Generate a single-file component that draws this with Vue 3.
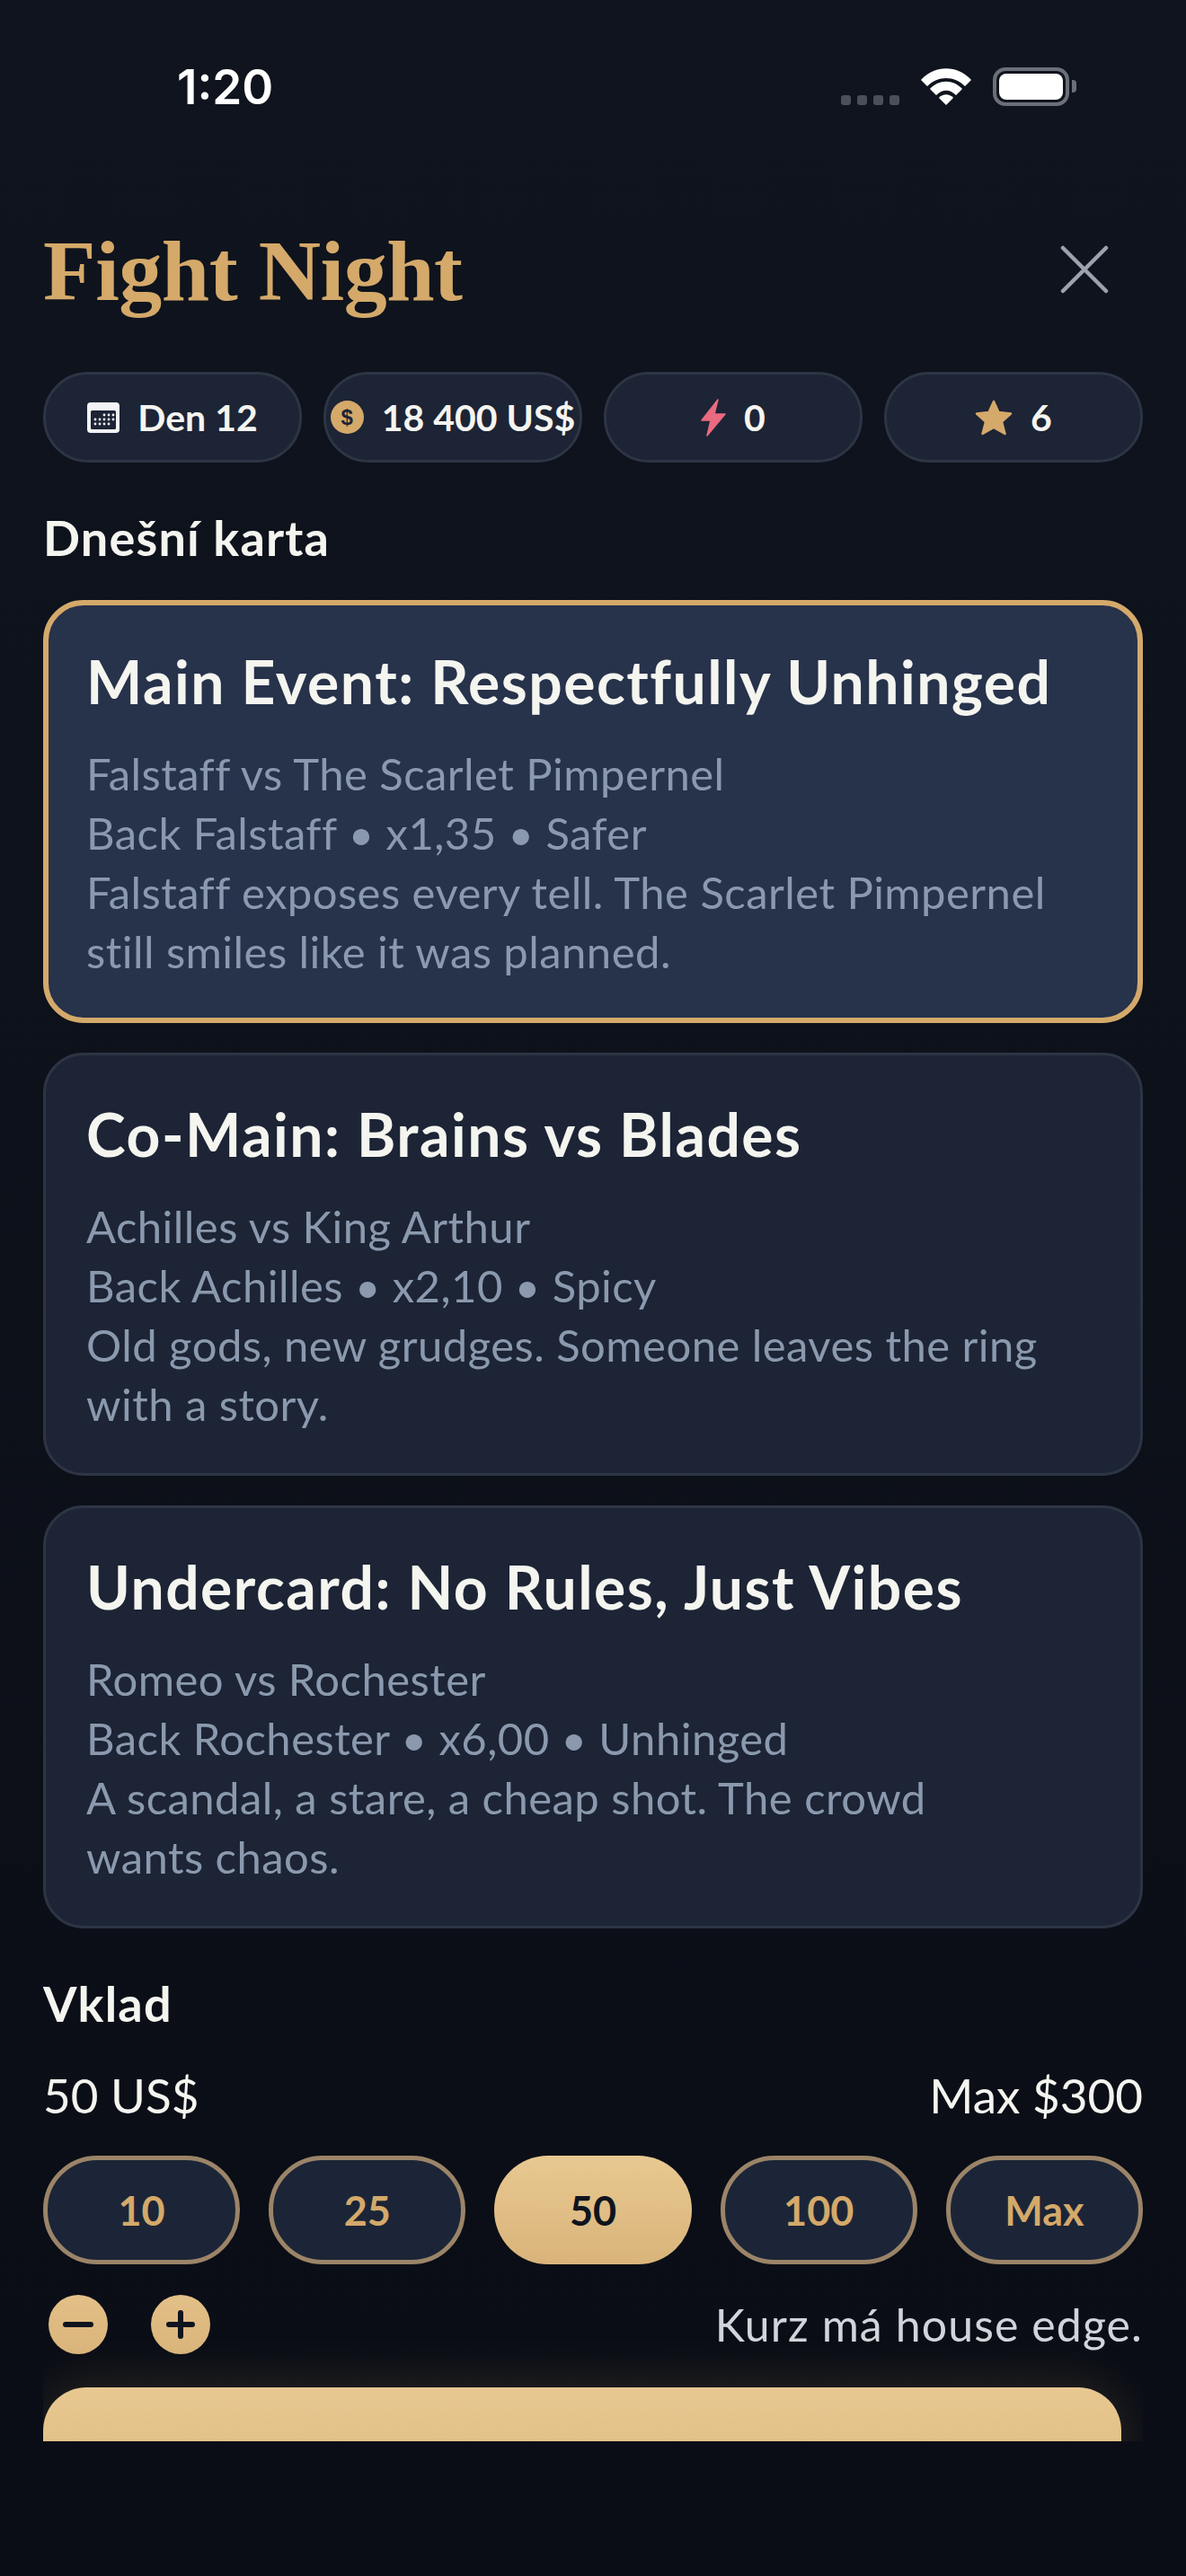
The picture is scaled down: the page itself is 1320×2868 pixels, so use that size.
<template>
  <div class="screen">
    <div class="status">
      <span class="time">1:20</span>
      <div class="status-icons">
        <div class="signal"><i></i><i></i><i></i><i></i></div>
        <svg class="wifi" width="58" height="42" viewBox="0 0 58 42">
          <path d="M1 14 C16 -3 42 -3 57 14 L50 21 C38 9 20 9 8 21 Z" fill="#fff" />
          <path d="M11 24 C21 13 37 13 47 24 L40 31 C33 24 25 24 18 31 Z" fill="#fff" />
          <path d="M21 34 C25 29 33 29 37 34 L29 42 Z" fill="#fff" />
        </svg>
        <div class="battery"><div class="battery-fill"></div></div>
        <div class="battery-cap"></div>
      </div>
    </div>

    <div class="sheet">
      <div class="header">
        <h1>Fight Night</h1>
        <svg class="close" width="54" height="54" viewBox="0 0 54 54">
          <path d="M3 3 L51 51 M51 3 L3 51" stroke="#9ca3af" stroke-width="4.5" stroke-linecap="round" />
        </svg>
      </div>

      <div class="pills">
        <div class="pill">
          <svg width="36" height="34" viewBox="0 0 36 34">
            <rect width="36" height="34" rx="4" fill="#f3f4f6" />
            <rect x="4" y="9" width="28" height="21" rx="1.5" fill="#1c2435" />
            <g fill="#f3f4f6">
              <circle v-for="d in calendarDots" :key="d.x + '-' + d.y" :cx="d.x" :cy="d.y" r="1.4" />
            </g>
          </svg>
          <span>Den 12</span>
        </div>
        <div class="pill">
          <div class="coin">$</div>
          <span>18 400 US$</span>
        </div>
        <div class="pill">
          <svg width="28" height="42" viewBox="0 0 28 42">
            <path d="M19 1 L1 24 L11 24 L7 41 L27 17 L15 17 Z" fill="#ea6a80" stroke="#ea6a80" stroke-width="1.5" stroke-linejoin="round" />
          </svg>
          <span>0</span>
        </div>
        <div class="pill">
          <svg width="42" height="40" viewBox="0 0 42 40">
            <path d="M21 2 L26.5 14 L40 15.5 L30 24.5 L33.5 38 L21 31 L8.5 38 L12 24.5 L2 15.5 L15.5 14 Z" fill="#d4a96a" stroke="#d4a96a" stroke-width="2.5" stroke-linejoin="round" />
          </svg>
          <span>6</span>
        </div>
      </div>

      <h2 class="section">Dnešní karta</h2>

      <div class="cards">
        <div v-for="(c, i) in cards" :key="c.title" class="card" :class="{ selected: i === 0 }">
          <h3>{{ c.title }}</h3>
          <p>{{ c.match }}</p>
          <p>{{ c.back }}</p>
          <p>{{ c.text }}</p>
        </div>
      </div>

      <h2 class="section stake">Vklad</h2>
      <div class="stake-row">
        <span>50 US$</span>
        <span>Max $300</span>
      </div>

      <div class="chips">
        <button v-for="a in amounts" :key="a" class="chip" :class="{ active: a === '50' }">{{ a }}</button>
      </div>

      <div class="adjust">
        <div class="steppers">
          <div class="step">
            <svg width="34" height="8" viewBox="0 0 34 8"><path d="M3 4 H31" stroke="#0f141e" stroke-width="6" stroke-linecap="round" /></svg>
          </div>
          <div class="step">
            <svg width="32" height="32" viewBox="0 0 32 32"><path d="M3 16 H29 M16 3 V29" stroke="#0f141e" stroke-width="6" stroke-linecap="round" /></svg>
          </div>
        </div>
        <span class="edge">Kurz má house edge.</span>
      </div>

      <button class="cta">Vsadit a spustit další kolo</button>
    </div>
  </div>
</template>

<script setup>
const cards = [
  {
    title: 'Main Event: Respectfully Unhinged',
    match: 'Falstaff vs The Scarlet Pimpernel',
    back: 'Back Falstaff • x1,35 • Safer',
    text: 'Falstaff exposes every tell. The Scarlet Pimpernel still smiles like it was planned.'
  },
  {
    title: 'Co-Main: Brains vs Blades',
    match: 'Achilles vs King Arthur',
    back: 'Back Achilles • x2,10 • Spicy',
    text: 'Old gods, new grudges. Someone leaves the ring with a story.'
  },
  {
    title: 'Undercard: No Rules, Just Vibes',
    match: 'Romeo vs Rochester',
    back: 'Back Rochester • x6,00 • Unhinged',
    text: 'A scandal, a stare, a cheap shot. The crowd wants chaos.'
  }
]

const amounts = ['10', '25', '50', '100', 'Max']

const calendarDots = []
for (const y of [14, 19, 24]) {
  for (const x of [9, 14, 19, 24, 29]) {
    if (y === 14 && x < 19) continue
    if (y === 24 && x > 24) continue
    calendarDots.push({ x, y })
  }
}
</script>

<style>
html,
body {
  margin: 0;
  background: #0b0e16;
}
</style>

<style scoped>
.screen {
  width: 1320px;
  height: 2868px;
  overflow: hidden;
  background: linear-gradient(180deg, #0f141e 0%, #0a0d15 100%);
  font-family: 'Lato', 'Noto Sans', sans-serif;
  color: #f5f5f0;
}

.status {
  height: 198px;
  box-sizing: border-box;
  padding: 70px 122px 0 197px;
  display: flex;
  justify-content: space-between;
  align-items: flex-start;
}

.time {
  font-family: 'Inter', sans-serif;
  font-size: 53px;
  line-height: 54px;
  font-weight: 600;
  color: #fff;
}

.status-icons {
  display: flex;
  align-items: flex-start;
  padding-top: 5px;
}

.signal {
  display: flex;
  gap: 7px;
  margin: 31px 23px 0 0;
}

.signal i {
  width: 11px;
  height: 11px;
  border-radius: 3px;
  background: #4b5058;
}

.wifi {
  margin-right: 23px;
}

.battery {
  width: 85px;
  height: 43px;
  box-sizing: border-box;
  border: 4px solid #6b7078;
  border-radius: 14px;
  padding: 3px;
}

.battery-fill {
  height: 100%;
  background: #fff;
  border-radius: 8px;
}

.battery-cap {
  width: 5px;
  height: 14px;
  margin: 14px 0 0 3px;
  background: #6b7078;
  border-radius: 0 4px 4px 0;
}

.sheet {
  width: 1224px;
  height: 2520px;
  margin-left: 48px;
  overflow: hidden;
}

.header {
  height: 216px;
  display: flex;
  justify-content: space-between;
  align-items: flex-start;
}

h1 {
  margin: 0;
  font-family: 'Liberation Serif', serif;
  font-size: 96px;
  line-height: 110px;
  font-weight: 700;
  letter-spacing: -0.5px;
  color: #d4a96a;
}

.close {
  margin: 75px 38px 0 0;
}

.header h1 {
  margin-top: 49px;
}

.pills {
  display: flex;
  gap: 24px;
}

.pill {
  flex: 1 1 0;
  min-width: 0;
  height: 101px;
  box-sizing: border-box;
  border: 3px solid #2d3545;
  border-radius: 50px;
  background: #1c2435;
  display: flex;
  align-items: center;
  justify-content: center;
  gap: 20px;
  font-size: 41px;
  font-weight: 700;
  white-space: nowrap;
}

.coin {
  flex: none;
  width: 37px;
  height: 37px;
  border-radius: 50%;
  background: #d4a96a;
  color: #1c2435;
  font-family: 'Liberation Sans', sans-serif;
  font-size: 24px;
  font-weight: 700;
  line-height: 37px;
  text-align: center;
}

.section {
  margin: 54px 0 0;
  font-size: 54px;
  line-height: 60px;
  font-weight: 700;
  letter-spacing: 1.2px;
}

.cards {
  margin-top: 39px;
  display: flex;
  flex-direction: column;
  gap: 33px;
}

.card {
  height: 471px;
  box-sizing: border-box;
  border: 3px solid #2d3545;
  border-radius: 45px;
  padding: 44px 45px 0;
  background: #1c2435;
}

.card.selected {
  border: 6px solid #d4a96a;
  padding: 41px 42px 0;
  background: #27324b;
}

.card h3 {
  margin: 0 0 25px;
  font-size: 66px;
  line-height: 88px;
  font-weight: 700;
  letter-spacing: 1.5px;
}

.card p {
  max-width: 1068px;
  margin: 0;
  font-size: 49px;
  line-height: 66px;
  letter-spacing: 0.45px;
  color: #8b99ae;
}

.stake {
  margin-top: 54px;
}

.stake-row {
  margin-top: 39px;
  display: flex;
  justify-content: space-between;
  font-size: 53px;
  line-height: 66px;
}

.chips {
  margin-top: 34px;
  display: grid;
  grid-template-columns: repeat(5, 1fr);
  gap: 32px;
}

.chip {
  height: 121px;
  padding: 0;
  border: 5px solid #9b8468;
  border-radius: 60px;
  background: #1c2537;
  color: #d4a96a;
  font-family: inherit;
  font-size: 45px;
  font-weight: 700;
}

.chip.active {
  border-color: transparent;
  background: linear-gradient(180deg, #e8c891 0%, #d9b47a 100%) border-box;
  color: #0f141e;
}

.adjust {
  margin-top: 34px;
  display: flex;
  justify-content: space-between;
  align-items: center;
}

.steppers {
  display: flex;
  gap: 48px;
  padding-left: 6px;
}

.step {
  width: 66px;
  height: 66px;
  border-radius: 50%;
  background: linear-gradient(180deg, #e3c088 0%, #d9b47a 100%);
  display: flex;
  align-items: center;
  justify-content: center;
}

.edge {
  font-size: 50px;
  letter-spacing: 1.1px;
  color: #d1d5db;
}

.cta {
  display: block;
  width: 1200px;
  height: 180px;
  margin-top: 37px;
  padding: 0 0 22px;
  border: none;
  border-radius: 48px;
  background: linear-gradient(180deg, #e8c891 0%, #d9b47a 100%);
  box-shadow: 0 0 60px rgba(212, 169, 106, 0.18);
  color: #0f141e;
  font-family: inherit;
  font-size: 54px;
  font-weight: 700;
  letter-spacing: 1px;
}
</style>
